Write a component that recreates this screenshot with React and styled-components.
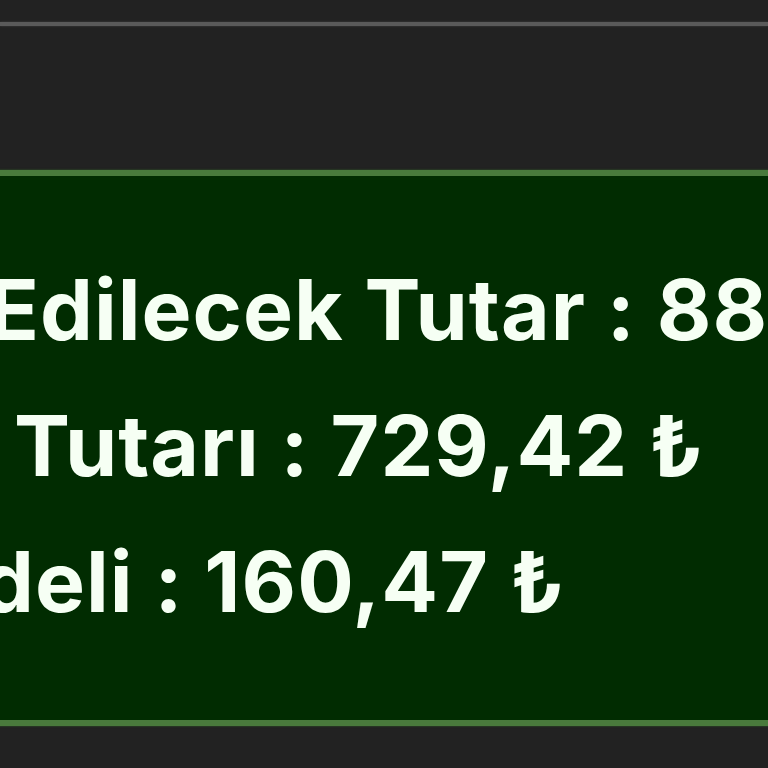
import styled, { createGlobalStyle } from 'styled-components';

const GlobalStyle = createGlobalStyle`
  html, body {
    margin: 0;
    padding: 0;
    background: #222222;
  }
  #root {
    width: 768px;
    height: 768px;
    overflow: hidden;
  }
`;

const Screen = styled.div`
  width: 768px;
  height: 768px;
  background: #222222;
  display: flex;
  flex-direction: column;
  overflow: hidden;
`;

// header bar strip, only its bottom edge shows
const HeaderRule = styled.div`
  margin-top: 22px;
  height: 4px;
  background: #5a5a5a;
  box-shadow: 0 0 2px #4a4a4a;
`;

const SummaryBox = styled.section`
  margin: 144px -120px 0 -100px;
  height: 478px;
  background: #012c01;
  border: 6px solid #497a3c;
  box-shadow: 0 0 2px #2f5a28;
  padding-top: 66px;
  box-sizing: content-box;
  display: flex;
  flex-direction: column;
`;

const Row = styled.div`
  display: flex;
  white-space: nowrap;
  color: #f6fff4;
  font-family: Inter, "Noto Sans", "DejaVu Sans", sans-serif;
  font-weight: 700;
  font-size: 84px;
  line-height: 136px;
  letter-spacing: 1px;
`;

// the part of the label that runs off the left edge
const Lead = styled.span`
  flex: 0 0 ${(p) => p.$at}px;
  min-width: 0;
  display: flex;
  justify-content: flex-end;
`;

const Rest = styled.span`
  flex: none;
`;

const rows = [
  { lead: 'Tahsil\u00a0', rest: 'Edilecek Tutar : 889,89 ₺', at: 82 },
  { lead: 'Hizmet\u00a0', rest: 'Tutarı : 729,42 ₺', at: 108 },
  { lead: 'KDV Be', rest: 'deli : 160,47 ₺', at: 75 },
];

export default function App() {
  return (
    <>
      <GlobalStyle />
      <Screen>
        <HeaderRule />
        <SummaryBox>
          {rows.map((r) => (
            <Row key={r.rest}>
              <Lead $at={r.at}>{r.lead}</Lead>
              <Rest>{r.rest}</Rest>
            </Row>
          ))}
        </SummaryBox>
      </Screen>
    </>
  );
}
